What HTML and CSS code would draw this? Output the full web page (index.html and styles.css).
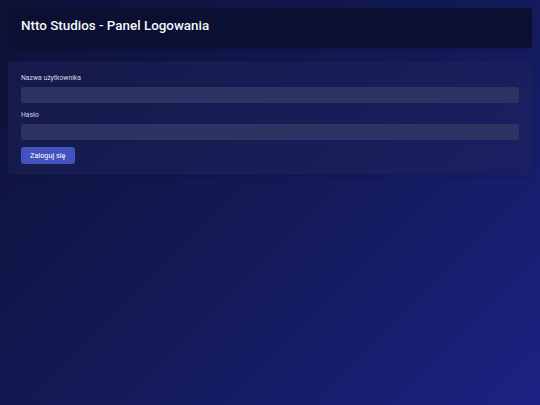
FILE: index.html
```html
<!DOCTYPE html>
<html lang="pl">
<head>
<meta charset="utf-8">
<title>Ntto Studios - Panel Logowania</title>
<link rel="stylesheet" href="styles.css">
</head>
<body>
<header class="header">
  <h1 class="title">Ntto Studios - Panel Logowania</h1>
</header>
<main class="card">
  <form class="form">
    <label class="label" for="user">Nazwa użytkownika</label>
    <input class="input" id="user" type="text">
    <label class="label" for="pass">Hasło</label>
    <input class="input input-last" id="pass" type="password">
    <button class="button" type="button">Zaloguj się</button>
  </form>
</main>
</body>
</html>
```
FILE: styles.css
```css
html, body {
  height: 100%;
}
body {
  margin: 0;
  padding: 8px;
  box-sizing: border-box;
  min-height: 405px;
  background: linear-gradient(135deg, #0d1236 0%, #141a5a 55%, #1b2283 100%);
  font-family: Roboto, "Noto Sans", sans-serif;
  color: #fff;
}
.header {
  background: #0b0f31;
  border-radius: 4px;
  padding: 0 13px;
  height: 40px;
  display: flex;
  align-items: center;
  box-shadow: 0 1px 4px rgba(0,0,0,0.2);
}
.title {
  margin: 0;
  font-size: 13.4px;
  font-weight: 500;
  color: #f5f6fa;
  position: relative;
  top: -2.5px;
}
.card {
  margin-top: 13px;
  background: rgba(30, 36, 90, 0.45);
  border-radius: 4px;
  padding: 13px 13px 11px;
  box-shadow: 0 1px 4px rgba(0,0,0,0.15);
}
.form {
  display: flex;
  flex-direction: column;
  align-items: flex-start;
}
.label {
  font-size: 6.8px;
  line-height: 9.6px;
  color: #d4d7e8;
  margin-bottom: 3.3px;
}
.input {
  align-self: stretch;
  height: 16px;
  box-sizing: border-box;
  border: none;
  border-radius: 3px;
  background: #2d3464;
  margin: 0 0 8.5px;
  padding: 0 6px;
  outline: none;
}
.input-last {
  margin-bottom: 6.7px;
}
.button {
  width: 53.5px;
  height: 17.5px;
  border: none;
  border-radius: 3px;
  background: #4352bd;
  color: #fff;
  font-family: Roboto, "Noto Sans", sans-serif;
  font-size: 7.3px;
  padding: 0;
}
```
